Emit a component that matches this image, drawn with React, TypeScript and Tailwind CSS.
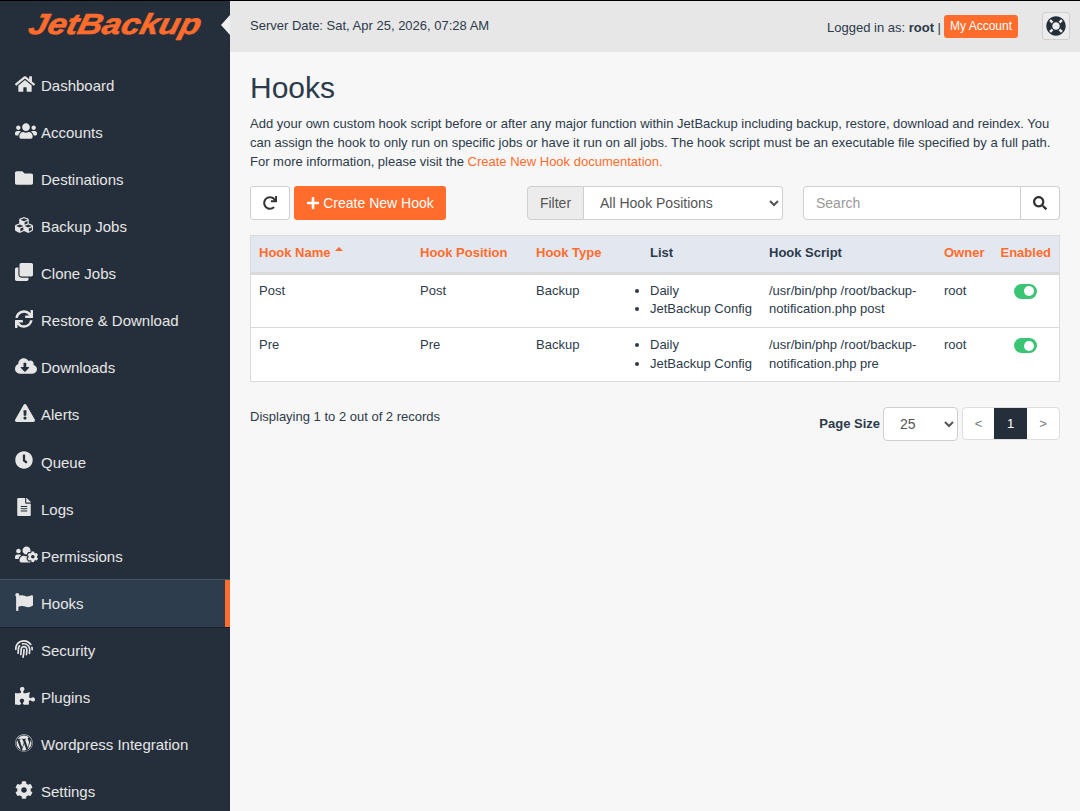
import React from 'react'
import {
  FaHome, FaUsers, FaFolder, FaCubes, FaClone, FaSync, FaCloudDownloadAlt, FaExclamationTriangle,
  FaClock, FaFileAlt, FaUsersCog, FaFlag, FaFingerprint, FaPuzzlePiece, FaWordpress, FaCog,
  FaRedo, FaPlus, FaSearch, FaLifeRing,
} from 'react-icons/fa'

const navItems = [
  { label: 'Dashboard', icon: FaHome, size: 'text-[20px]' },
  { label: 'Accounts', icon: FaUsers, size: 'text-[22px]' },
  { label: 'Destinations', icon: FaFolder, size: 'text-[18px]' },
  { label: 'Backup Jobs', icon: FaCubes, size: 'text-[18px]' },
  { label: 'Clone Jobs', icon: FaClone, size: 'text-[18px]' },
  { label: 'Restore & Download', icon: FaSync, size: 'text-[18px]' },
  { label: 'Downloads', icon: FaCloudDownloadAlt, size: 'text-[22px]' },
  { label: 'Alerts', icon: FaExclamationTriangle, size: 'text-[20px]' },
  { label: 'Queue', icon: FaClock, size: 'text-[18px]' },
  { label: 'Logs', icon: FaFileAlt, size: 'text-[18px]' },
  { label: 'Permissions', icon: FaUsersCog, size: 'text-[23px]' },
  { label: 'Hooks', icon: FaFlag, size: 'text-[18px]', active: true },
  { label: 'Security', icon: FaFingerprint, size: 'text-[18px]' },
  { label: 'Plugins', icon: FaPuzzlePiece, size: 'text-[20px]' },
  { label: 'Wordpress Integration', icon: FaWordpress, size: 'text-[18px]' },
  { label: 'Settings', icon: FaCog, size: 'text-[18px]' },
]

const rows = [
  { name: 'Post', position: 'Post', script: '/usr/bin/php /root/backup-notification.php post', pad: 'pt-[6.5px]' },
  { name: 'Pre', position: 'Pre', script: '/usr/bin/php /root/backup-notification.php pre', pad: 'pt-[8px]' },
]

function Sidebar() {
  return (
    <aside className="w-[230px] shrink-0 bg-[#252f3b] h-full overflow-hidden">
      <div className="h-[61px] flex justify-center items-start">
        <span className="mt-[1px] ml-[1px] text-[#ff6c2c] text-[29px] leading-[44px] font-bold italic [-webkit-text-stroke:0.6px_#ff6c2c] [transform:skewX(-14deg)_scaleX(1.17)]">
          JetBackup
        </span>
      </div>
      <nav>
        {navItems.map((item) => {
          const Icon = item.icon
          return (
            <a
              key={item.label}
              className={`flex items-center h-[47.1px] pl-[15px] text-[15px] text-[#e6e6e6] ${
                item.active ? 'bg-[#2e3d4d] border-r-[5px] border-[#ff6c2c] shadow-[0_-1px_0_#45525f,0_1px_0_#1a222b]' : ''
              }`}
            >
              <span className="w-[26px] shrink-0 flex items-center mb-[4px]">
                <Icon className={item.size} />
              </span>
              <span className="mt-[1px]">{item.label}</span>
            </a>
          )
        })}
      </nav>
    </aside>
  )
}

function Topbar() {
  return (
    <header className="relative h-[51px] bg-[#e7e7e7] flex items-center pl-5 pr-[10px]">
      <span className="absolute left-[-9px] top-[14px] w-0 h-0 border-y-[10px] border-y-transparent border-r-[9px] border-r-[#f0f0f0]" />
      <span className="mb-[2px]">Server Date: Sat, Apr 25, 2026, 07:28 AM</span>
      <div className="ml-auto flex items-center">
        <span className="mt-[2px]">
          Logged in as: <b>root</b> |
        </span>
        <span className="ml-[3px] mb-[1px] h-[23px] px-[6px] rounded-[3px] bg-[#ff6c2c] text-white text-[12px] leading-[22px]">My Account</span>
        <button className="ml-6 mb-[2px] w-[28px] h-[28px] rounded-[3px] border border-[#cfcfcf] bg-[#ececec] flex items-center justify-center text-[#252f3b]">
          <FaLifeRing className="text-[20px]" />
        </button>
      </div>
    </header>
  )
}

function Toggle() {
  return (
    <span className="flex justify-center mt-[2px]">
      <span className="w-[23px] h-[15px] rounded-full bg-[#3ac574] flex items-center justify-end pr-[3px]">
        <span className="w-[10px] h-[10px] rounded-full bg-white" />
      </span>
    </span>
  )
}

function HooksTable() {
  const th = 'text-left font-bold px-2 pb-[2px] align-middle'
  const td = 'px-2 align-top'
  return (
    <table className="mt-[15px] w-[810px] table-fixed border-collapse bg-white border border-[#dadada] leading-[18.57px]">
      <colgroup>
        <col className="w-[161.5px]" />
        <col className="w-[116px]" />
        <col className="w-[114px]" />
        <col className="w-[119px]" />
        <col className="w-[175px]" />
        <col className="w-[56.5px]" />
        <col />
      </colgroup>
      <thead>
        <tr className="h-[38px] bg-[#e3e7ef] border-b-[3px] border-[#dadada]">
          <th className={`${th} text-[#ff6c2c]`}>
            Hook Name
            <span className="inline-block ml-[4px] mb-[6px] w-0 h-0 border-x-[4px] border-x-transparent border-b-[4px] border-b-[#ff6c2c]" />
          </th>
          <th className={`${th} text-[#ff6c2c]`}>Hook Position</th>
          <th className={`${th} text-[#ff6c2c]`}>Hook Type</th>
          <th className={`${th} text-[#2c3a4a]`}>List</th>
          <th className={`${th} text-[#2c3a4a]`}>Hook Script</th>
          <th className={`${th} text-[#ff6c2c]`}>Owner</th>
          <th className={`${th} text-[#ff6c2c] whitespace-nowrap`}>Enabled</th>
        </tr>
      </thead>
      <tbody>
        {rows.map((row) => (
          <tr key={row.name} className="h-[54px] border-b border-[#dadada] last:border-b-0">
            <td className={`${td} ${row.pad}`}>{row.name}</td>
            <td className={`${td} ${row.pad}`}>{row.position}</td>
            <td className={`${td} ${row.pad}`}>Backup</td>
            <td className={`${td} ${row.pad}`}>
              <ul className="list-disc">
                <li>Daily</li>
                <li className="whitespace-nowrap">JetBackup Config</li>
              </ul>
            </td>
            <td className={`${td} ${row.pad}`}>{row.script}</td>
            <td className={`${td} ${row.pad}`}>root</td>
            <td className={`${td} ${row.pad}`}>
              <Toggle />
            </td>
          </tr>
        ))}
      </tbody>
    </table>
  )
}

export default function App() {
  return (
    <div className="h-[811px] overflow-hidden flex border-t border-black bg-[#f7f7f7] text-[13px] text-[#2c3a4a] font-['Liberation_Sans',Arial,sans-serif]">
      <Sidebar />
      <div className="flex-1 min-w-0">
        <Topbar />
        <main className="px-5">
          <h1 className="mt-[18px] text-[30px] leading-[36px]">Hooks</h1>
          <p className="mt-[8px] leading-[19px]">
            Add your own custom hook script before or after any major function within JetBackup including backup, restore, download and reindex. You can assign the hook to only run on specific jobs or have it run on all jobs. The hook script must be an executable file specified by a full path. For more information, please visit the{' '}
            <a className="text-[#ff6c2c]">Create New Hook documentation.</a>
          </p>

          <div className="mt-[15px] flex items-center h-[34px] text-[14px]">
            <button className="w-10 h-[34px] rounded-[3px] border border-[#cfcfcf] bg-white flex items-center justify-center text-[#333]">
              <FaRedo className="text-[14px]" />
            </button>
            <button className="ml-1 w-[152px] h-[34px] rounded-[3px] bg-[#ff6c2c] text-white flex items-center justify-center gap-[3px]">
              <FaPlus className="text-[14px]" />
              Create New Hook
            </button>
            <div className="ml-[81px] flex h-[34px] w-[256px]">
              <span className="w-[57px] rounded-l-[4px] border border-[#cfcfcf] bg-[#ececec] text-[#555] flex items-center justify-center">Filter</span>
              <select className="flex-1 min-w-0 rounded-r-[4px] border border-l-0 border-[#cfcfcf] bg-white pl-3 text-[#555]">
                <option>All Hook Positions</option>
              </select>
            </div>
            <div className="ml-5 flex h-[34px] w-[257px]">
              <input
                placeholder="Search"
                className="flex-1 min-w-0 rounded-l-[4px] border border-[#cfcfcf] bg-white px-3 outline-none placeholder:text-[#999]"
              />
              <button className="w-[39px] rounded-r-[4px] border border-l-0 border-[#cfcfcf] bg-white flex items-center justify-center text-[#333]">
                <FaSearch className="text-[14px]" />
              </button>
            </div>
          </div>

          <HooksTable />

          <div className="mt-[25px] flex items-start">
            <span>Displaying 1 to 2 out of 2 records</span>
            <div className="ml-auto flex items-center">
              <b className="mr-[3px]">Page Size</b>
              <select className="w-[75px] h-[34px] rounded-[4px] border border-[#cfcfcf] bg-white pl-3 text-[14px] text-[#555]">
                <option>25</option>
              </select>
              <div className="ml-1 flex h-[33px] rounded-[4px] border border-[#dedede] bg-white overflow-hidden text-[#777] mb-[1px]">
                <span className="w-[31px] flex items-center justify-center">&lt;</span>
                <span className="w-[33px] flex items-center justify-center bg-[#252f3b] text-white">1</span>
                <span className="w-[32px] flex items-center justify-center">&gt;</span>
              </div>
            </div>
          </div>
        </main>
      </div>
    </div>
  )
}
